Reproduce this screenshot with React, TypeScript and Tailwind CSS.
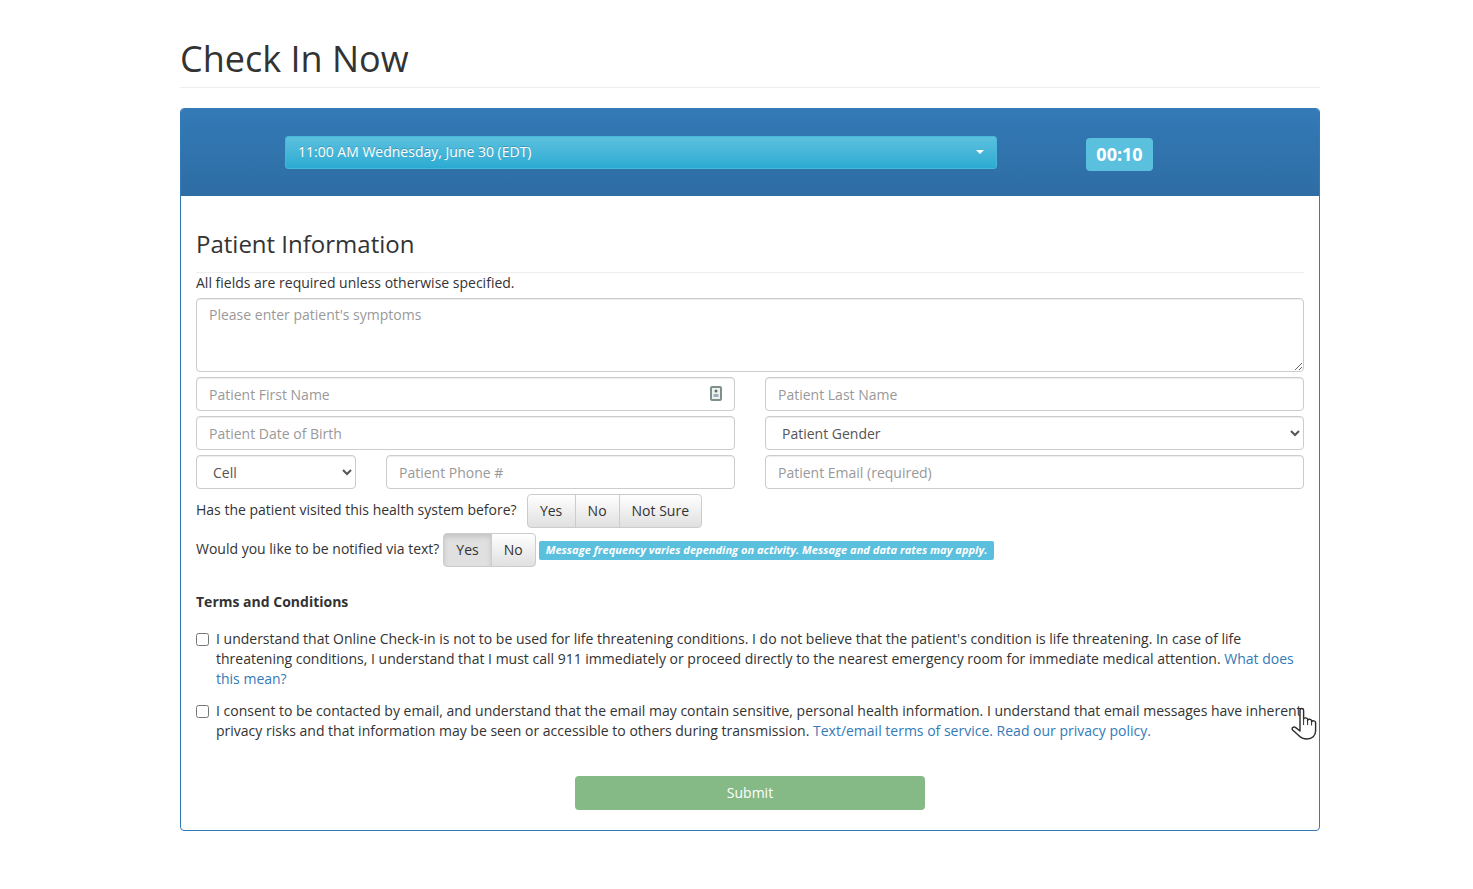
import { useState } from "react";

const fieldShadow = "shadow-[inset_0_1px_1px_rgba(0,0,0,0.075)]";
const inputClass = `h-[34px] w-full rounded border border-[#ccc] bg-white px-3 text-sm text-[#555] placeholder:text-[#999] outline-none ${fieldShadow}`;
const selectClass = `h-[34px] w-full rounded border border-[#ccc] bg-white pl-3 pr-[13px] text-sm text-[#555] outline-none ${fieldShadow}`;
const toggleClass =
  "h-[34px] border border-[#ccc] bg-gradient-to-b from-white to-[#e0e0e0] px-3 text-sm text-[#333]";

function ContactIcon() {
  return (
    <svg width="12" height="15" viewBox="0 0 12 15" className="absolute right-[13px] top-[9px]">
      <rect x="1" y="1" width="10" height="13" rx="1" fill="#eef2f2" stroke="#7f8f8a" strokeWidth="2" />
      <circle cx="6" cy="5" r="1.5" fill="#5f6f6a" />
      <rect x="3.5" y="8" width="5" height="3" fill="#9fb0b8" />
    </svg>
  );
}

function HandCursor() {
  return (
    <svg
      width="28"
      height="35"
      viewBox="0 0 28 35"
      className="absolute left-[1291px] top-[707px] pointer-events-none"
    >
      <path
        d="M9 3.2c0-2.2 3.6-2.2 3.6 0V12c.2-1.6 3.8-1.6 4 .3v1c.4-1.6 3.8-1.4 4 .5v.9c.5-1.4 3.9-1.1 4 .9v8.4c0 4.6-3.4 8-8.6 8-4.2 0-6-1-8-3.2L1.6 23c-1.4-1.8.9-3.8 2.8-2.6L9 24V3.2z"
        fill="#fff"
        stroke="#2b2b2b"
        strokeWidth="1.4"
        strokeLinejoin="round"
      />
      <path d="M12.6 12v6M16.6 13v5M20.6 14.5v4" stroke="#2b2b2b" strokeWidth="1" fill="none" />
    </svg>
  );
}

export default function App() {
  const [symptoms, setSymptoms] = useState("");

  return (
    <div
      className="relative min-h-[889px] bg-white text-sm text-[#333]"
      style={{ fontFamily: '"Open Sans", "Liberation Sans", sans-serif' }}
    >
      <div className="ml-[180px] w-[1140px] pt-[39px]">
        <div className="border-b border-[#eee] pb-2">
          <h1 className="text-[36px] leading-[40px] text-[#333]">Check In Now</h1>
        </div>

        <div className="mt-5 overflow-hidden rounded border border-[#337ab7]">
          <div className="-mx-px -mt-px flex h-[88px] items-start bg-gradient-to-b from-[#337ab7] to-[#2e6da4] pl-[105px]">
            <button className="mt-[28px] flex h-[33px] w-[712px] items-center justify-between rounded-[3px] border border-[#46b8da] bg-gradient-to-b from-[#5bc0de] to-[#2aabd2] px-3 pb-0.5 text-sm text-white [text-shadow:0_-1px_0_rgba(0,0,0,0.2)]">
              <span>11:00 AM Wednesday, June 30 (EDT)</span>
              <span className="h-0 w-0 border-x-4 border-t-4 border-x-transparent border-t-white" />
            </button>
            <div className="ml-[89px] mt-[30px] flex h-[33px] w-[67px] items-center justify-center rounded bg-[#5bc0de] pb-0.5 text-lg font-bold text-white">
              00:10
            </div>
          </div>

          <div className="px-[15px] pb-5 pt-[33px]">
            <h2 className="border-b border-[#eee] pb-[13px] text-2xl leading-[30px] text-[#333]">
              Patient Information
            </h2>
            <p className="leading-5">All fields are required unless otherwise specified.</p>

            <textarea
              className={`mt-[5px] block h-[74px] w-full rounded border border-[#ccc] px-3 py-1.5 text-sm leading-5 text-[#555] placeholder:text-[#999] outline-none ${fieldShadow}`}
              placeholder="Please enter patient's symptoms"
              value={symptoms}
              onChange={(e) => setSymptoms(e.target.value)}
            />

            <div className="mt-[5px] grid grid-cols-2 gap-x-[30px] gap-y-[5px]">
              <div className="relative">
                <input className={inputClass} placeholder="Patient First Name" />
                <ContactIcon />
              </div>
              <input className={inputClass} placeholder="Patient Last Name" />
              <input className={inputClass} placeholder="Patient Date of Birth" />
              <select className={selectClass} defaultValue="">
                <option value="">Patient Gender</option>
              </select>
              <div className="flex gap-[30px]">
                <select className={`${selectClass} !w-[160px] shrink-0`} defaultValue="cell">
                  <option value="cell">Cell</option>
                </select>
                <input className={inputClass} placeholder="Patient Phone #" />
              </div>
              <input className={inputClass} placeholder="Patient Email (required)" />
            </div>

            <div className="mt-[5px] flex items-center">
              <span className="mb-0.5 mr-2.5">Has the patient visited this health system before?</span>
              <div className="flex">
                <button className={`${toggleClass} w-[49px] rounded-l`}>Yes</button>
                <button className={`${toggleClass} -ml-px`}>No</button>
                <button className={`${toggleClass} -ml-px rounded-r`}>Not Sure</button>
              </div>
            </div>

            <div className="mt-[5px] flex items-center">
              <span className="mb-0.5 mr-1">Would you like to be notified via text?</span>
              <div className="flex">
                <button className="h-[34px] rounded-l border border-[#ccc] bg-[#e0e0e0] px-3 text-sm text-[#333] shadow-[inset_0_3px_5px_rgba(0,0,0,0.125)]">
                  Yes
                </button>
                <button className={`${toggleClass} -ml-px rounded-r`}>No</button>
              </div>
              <span className="ml-[3px] flex h-[19px] items-center rounded-[2px] bg-[#5bc0de] px-[7px] text-[11.08px] font-bold italic text-white">
                Message frequency varies depending on activity. Message and data rates may apply.
              </span>
            </div>

            <h4 className="mt-[25px] font-bold leading-5">Terms and Conditions</h4>

            <label className="mt-[17px] flex leading-5">
              <input type="checkbox" className="mr-[7px] mt-1 h-[13px] w-[13px] shrink-0" />
              <span>
                I understand that Online Check-in is not to be used for life threatening conditions. I do not believe
                that the patient's condition is life threatening. In case of life threatening conditions, I understand
                that I must call 911 immediately or proceed directly to the nearest emergency room for immediate medical
                attention. <a className="text-[#337ab7]">What does this mean?</a>
              </span>
            </label>

            <label className="mt-3 flex leading-5">
              <input type="checkbox" className="mr-[7px] mt-1 h-[13px] w-[13px] shrink-0" />
              <span>
                I consent to be contacted by email, and understand that the email may contain sensitive, personal health
                information. I understand that email messages have inherent privacy risks and that information may be
                seen or accessible to others during transmission.{" "}
                <a className="text-[#337ab7]">Text/email terms of service.</a>{" "}
                <a className="text-[#337ab7]">Read our privacy policy.</a>
              </span>
            </label>

            <div className="mt-[35px] flex justify-center">
              <button className="h-[34px] w-[350px] rounded bg-[#85b985] text-sm text-white">Submit</button>
            </div>
          </div>
        </div>
      </div>
      <HandCursor />
    </div>
  );
}
